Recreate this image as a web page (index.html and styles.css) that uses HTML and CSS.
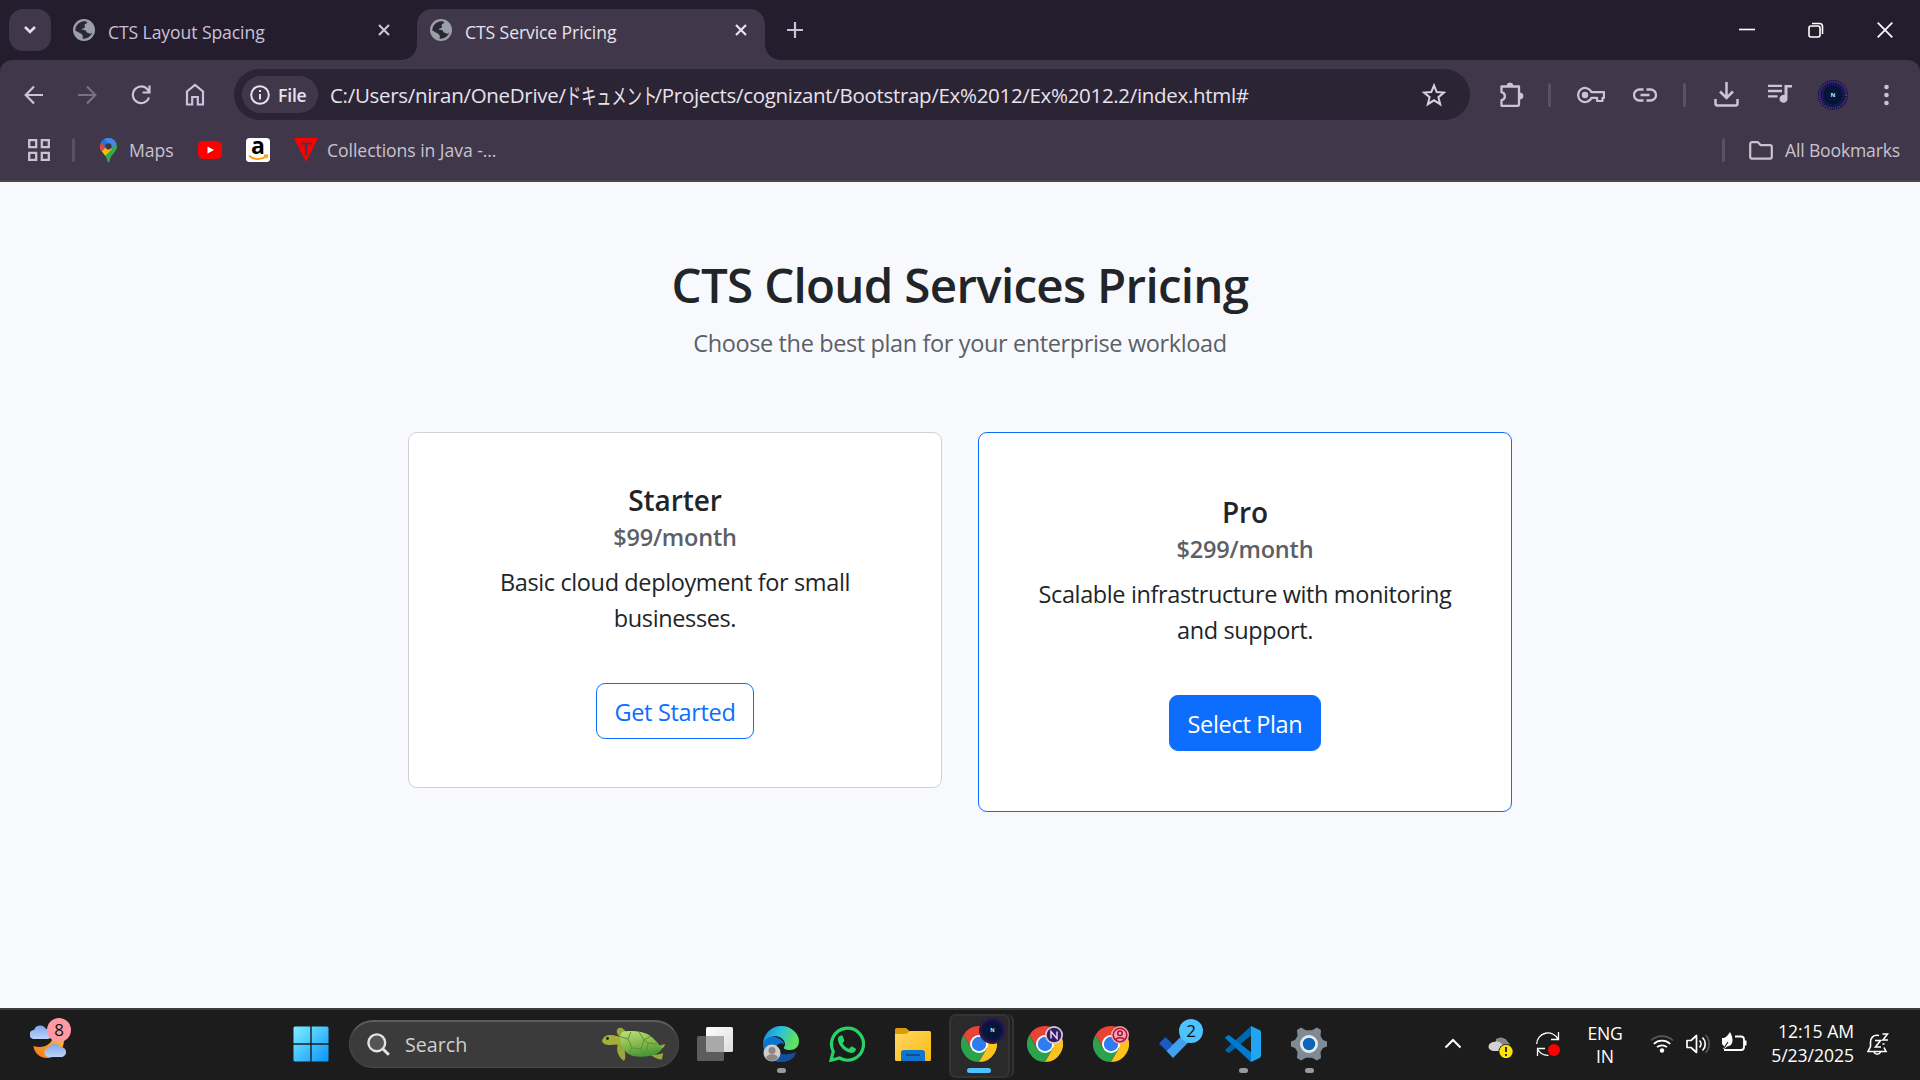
FILE: index.html
```html
<!DOCTYPE html>
<html lang="en">
<head>
<meta charset="utf-8">
<title>CTS Service Pricing</title>
<link rel="stylesheet" href="styles.css">
</head>
<body>
<svg class="defs" width="0" height="0" aria-hidden="true">
  <symbol id="globe" viewBox="0 0 22 22"><circle cx="11" cy="11" r="11" fill="#9aa0a6"/><path fill="#2c2637" d="M11 2.200c1.800 0 2.900 0.400 3.300 1.200-0.600 1.200-2.500 1.300-2.700 2.700-0.100 1.200 0.900 1.700 0 2.700C10.700 9.700 9 9 8.600 10.500c2 0.500 4.200 0.300 4.700 2 0.400 1.700 2.100 1.200 3.100 2 1 0.600 1.900 0.200 3-1.200A9 9 0 0 1 9.500 19.700c0.500-1.700 0.600-3.200-0.600-4.200C7.100 14 4.700 13 2.300 11.600 2.300 6.500 6 2.600 11 2.200z"/></symbol>
  <symbol id="x" viewBox="0 0 12 12"><path d="M1 1l10 10M11 1L1 11" fill="none" stroke="currentColor" stroke-width="2.200"/></symbol>
  <symbol id="chrome" viewBox="0 0 36 36"><path fill="#e94335" d="M2.400 9A18 18 0 0 1 33.600 9H18L10.200 22.500z"/><path fill="#2ba24c" d="M2.400 9A18 18 0 0 0 18 36L25.800 22.500H10.200z"/><path fill="#fcc31e" d="M33.600 9A18 18 0 0 1 18 36L25.800 22.500 18 9z"/><circle cx="18" cy="18" r="9" fill="#fff"/><circle cx="18" cy="18" r="7.200" fill="#2f7bf0"/></symbol>
</svg>

<header class="tabs">
  <button class="tab-search"><svg width="14" height="10" viewBox="0 0 14 10"><path d="M2 2l5 5 5-5" fill="none" stroke="#e6e0ea" stroke-width="2.600"/></svg></button>
  <div class="tab">
    <svg class="fav"><use href="#globe"/></svg><span class="tab-title">CTS Layout Spacing</span><svg class="x"><use href="#x"/></svg>
  </div>
  <div class="tab active">
    <svg class="fav"><use href="#globe"/></svg><span class="tab-title">CTS Service Pricing</span><svg class="x"><use href="#x"/></svg>
  </div>
  <svg class="new-tab" width="16" height="16" viewBox="0 0 16 16"><path d="M8 0v16M0 8h16" stroke="#cbc0d8" stroke-width="2.200"/></svg>
  <div class="win">
    <svg width="16" height="16" viewBox="0 0 16 16"><path d="M0 7.500h16" stroke="#fff" stroke-width="1.600"/></svg>
    <svg width="16" height="16" viewBox="0 0 16 16" fill="none" stroke="#fff" stroke-width="1.600"><rect x="1" y="4" width="11" height="11" rx="2"/><path d="M4 1.500h7.500a3 3 0 0 1 3 3V12"/></svg>
    <svg width="16" height="16" viewBox="0 0 16 16"><path d="M.7.700l14.600 14.600M15.300.700L.7 15.300" stroke="#fff" stroke-width="1.700"/></svg>
  </div>
</header>

<div class="chrome-bg"><div class="chrome">
<nav class="toolbar">
  <svg class="i-back" width="20" height="20" viewBox="0 0 20 20" fill="none" stroke="#cdc2dc" stroke-width="2.200"><path d="M19 10H2M10 1.500L1.700 10l8.300 8.500"/></svg>
  <svg class="i-fwd" width="20" height="20" viewBox="0 0 20 20" fill="none" stroke="#796f86" stroke-width="2.200"><path d="M1 10h17M10 1.500l8.300 8.500-8.300 8.500"/></svg>
  <svg class="i-reload" width="20" height="20" viewBox="0 0 20 20" fill="none" stroke="#cdc2dc" stroke-width="2.200"><path d="M18 12.500A8.300 8.300 0 1 1 16.400 4.300L18 6.500M18.500.500V7.500H11.500"/></svg>
  <svg class="i-home" width="20" height="23" viewBox="0 0 20 23" fill="none" stroke="#cdc2dc" stroke-width="2.200"><path d="M2 21.500V8.500L10 2l8 6.500v13h-5.200v-7.500H7.200v7.500z"/></svg>
  <div class="omnibox">
    <div class="chip">
      <svg width="20" height="20" viewBox="0 0 20 20" fill="none" stroke="#e8e2ec" stroke-width="2"><circle cx="10" cy="10" r="8.800"/><path d="M10 9v5.500M10 5v2"/></svg>
      <span class="file">File</span>
    </div>
    <div class="url"><span>C:/Users/niran/OneDrive/</span><span class="jp"><span class="kana">ドキュメント</span></span><span>/Projects/cognizant/Bootstrap/Ex%2012/Ex%2012.2/index.html#</span></div>
    <svg class="star" width="24" height="24" viewBox="0 0 24 24" fill="none" stroke="#d8d0df" stroke-width="2"><path d="M12 2.500l2.700 6.600 7.200.500-5.500 4.600 1.800 7-6.200-3.900-6.200 3.900 1.800-7L2.100 9.600l7.200-.5z"/></svg>
  </div>
  <svg class="i-ext" width="26" height="26" viewBox="0 0 26 26"><path d="M3.500 4.500h17.500v17.800a1.500 1.500 0 0 1-1.500 1.500H3.500v-5.600c4.500-1 4.500-7 0-8z" fill="none" stroke="#cdc2dc" stroke-width="2.300" stroke-linejoin="round"/><path d="M9 4a3 3 0 0 1 6 0zM22 11a3 3 0 0 1 0 6z" fill="#cdc2dc" stroke="#cdc2dc"/></svg>
  <i class="sep s1"></i>
  <svg class="i-key" width="28" height="18" viewBox="0 0 28 18"><path d="M14.500 6.200H27v5.600h-1.500V15h-5.400v-3.200h-5.600A7 7 0 1 1 14.500 6.200z" fill="none" stroke="#cdc2dc" stroke-width="2.200" stroke-linejoin="round"/><circle cx="8" cy="9" r="3.200" fill="#cdc2dc"/></svg>
  <svg class="i-link" width="24" height="14" viewBox="0 0 24 14" fill="none" stroke="#cdc2dc" stroke-width="2.300"><path d="M10.500 1.500H6.500a5.500 5.500 0 0 0 0 11h4M13.500 1.500h4a5.500 5.500 0 0 1 0 11h-4M7.500 7h9"/></svg>
  <i class="sep s2"></i>
  <svg class="i-dl" width="25" height="25" viewBox="0 0 25 25" fill="none" stroke="#cdc2dc" stroke-width="2.500"><path d="M12.500 0v15.500M6 9.500l6.500 6.500L19 9.500M1.500 17v4.500a2 2 0 0 0 2 2h18a2 2 0 0 0 2-2V17"/></svg>
  <svg class="i-media" width="24" height="19" viewBox="0 0 24 19"><path d="M0 1.800h14M0 7h14M0 12.300h9.500" stroke="#cdc2dc" stroke-width="2.300"/><path d="M16.500 1H24v2.600h-4.500v11.200a4 4 0 1 1-3-3.800z" fill="#cdc2dc"/></svg>
  <svg class="i-avatar" width="30" height="30" viewBox="0 0 30 30"><circle cx="15" cy="15" r="15" fill="#0b1238"/><circle cx="15" cy="15" r="13.300" fill="none" stroke="#5a3190" stroke-width="2.500" stroke-dasharray="1.200 1"/><circle cx="15" cy="15" r="10.500" fill="none" stroke="#252562" stroke-width="2" stroke-dasharray="1 1"/><circle cx="15" cy="15" r="9" fill="#02153a"/><text x="15" y="17.200" text-anchor="middle" class="avatar-n">N</text></svg>
  <svg class="i-dots" width="5" height="22" viewBox="0 0 5 22" fill="#cdc2dc"><circle cx="2.500" cy="3" r="2.300"/><circle cx="2.500" cy="11" r="2.300"/><circle cx="2.500" cy="19" r="2.300"/></svg>
</nav>
<nav class="bookmarks">
  <svg class="b-apps" width="22" height="22" viewBox="0 0 22 22" fill="none" stroke="#c9c3ce" stroke-width="2.300"><path d="M1.200 1.200h7v7h-7zM13.800 1.200h7v7h-7zM1.200 13.800h7v7h-7zM13.800 13.800h7v7h-7z"/></svg>
  <i class="sep b1"></i>
  <svg class="b-pin" width="17" height="24" viewBox="0 0 17 24"><defs><clipPath id="pin"><path d="M8.500 0A8.500 8.500 0 0 1 17 8.500c0 5.500-6.500 7.500-7.500 15a1 1 0 0 1-2 0C6.500 16 0 14 0 8.500A8.500 8.500 0 0 1 8.500 0z"/></clipPath></defs><g clip-path="url(#pin)"><path fill="#34a853" d="M0 0h17v24H0z"/><path fill="#fbbc04" d="M0 9l5-2 7 4L4 19H0z"/><path fill="#ea4335" d="M0 2l7 6-5.500 6H0z"/><path fill="#4285f4" d="M1 3L6 0h11v5L8 12z"/><path fill="#1a73e8" d="M1 3L3 0l6 6-4 4z"/></g><circle cx="8.500" cy="8.300" r="3.100" fill="#40374b"/></svg>
  <span class="bm m1">Maps</span>
  <svg class="b-yt" width="24" height="18" viewBox="0 0 24 18"><rect width="24" height="18" rx="5" fill="#f00"/><path d="M9.500 5.500v7l6.500-3.500z" fill="#fff"/></svg>
  <svg class="b-amz" width="24" height="24" viewBox="0 0 24 24"><rect width="24" height="24" rx="3.500" fill="#fff"/><text x="12" y="16" text-anchor="middle" class="amz-a">a</text><path d="M3 17.800c5 4.300 12 4.300 17 .700" fill="none" stroke="#ff9900" stroke-width="1.800"/><path d="M18 17.300l3.500-.3-.8 3.600" fill="none" stroke="#ff9900" stroke-width="1.300"/></svg>
  <svg class="b-tri" width="24" height="24" viewBox="0 0 24 24"><path d="M0 0h24L12 24z" fill="#f00"/><path d="M6.500 5.500h11M12 5.500V17" stroke="#40374b" stroke-width="2.200"/></svg>
  <span class="bm m2">Collections in Java -...</span>
  <i class="sep b2"></i>
  <svg class="b-folder" width="24" height="19" viewBox="0 0 24 19" fill="none" stroke="#c9c3ce" stroke-width="2.200" stroke-linejoin="round"><path d="M1.200 3a1.800 1.800 0 0 1 1.800-1.800h6l2.700 3h9.300a1.800 1.800 0 0 1 1.800 1.800v9.800a1.800 1.800 0 0 1-1.800 1.800H3a1.800 1.800 0 0 1-1.800-1.800z"/></svg>
  <span class="bm m3">All Bookmarks</span>
</nav>
</div></div>

<main class="page">
  <h1>CTS Cloud Services Pricing</h1>
  <p class="lead">Choose the best plan for your enterprise workload</p>
  <div class="cards">
    <section class="card">
      <h2>Starter</h2>
      <h3>$99/month</h3>
      <p>Basic cloud deployment for small<br>businesses.</p>
      <a class="btn outline"><span>Get Started</span></a>
    </section>
    <section class="card pro">
      <h2>Pro</h2>
      <h3>$299/month</h3>
      <p>Scalable infrastructure with monitoring<br>and support.</p>
      <a class="btn solid"><span>Select Plan</span></a>
    </section>
  </div>
</main>

<footer class="taskbar">
  <div class="weather">
    <svg width="36" height="42" viewBox="0 0 36 42"><defs><linearGradient id="moon" x1="0" y1="1" x2="1" y2="0"><stop offset="0" stop-color="#f27a1a"/><stop offset="1" stop-color="#f9c440"/></linearGradient><linearGradient id="cl" x1="0" y1="0" x2="0" y2="1"><stop offset="0" stop-color="#7ea6ee"/><stop offset="1" stop-color="#bcd3fb"/></linearGradient></defs><path d="M3.500 29c10 3 17-1 20-9 2-4 1-5 1-6 7 0 9.500 4 9.500 9 0 10-8 18-17 18C9 41 4 35 3.500 29z" fill="url(#moon)"/><path d="M4 22a4.500 4.500 0 0 1 0-9 6.500 6.500 0 0 1 12-1 5 5 0 0 1 2 10z" fill="url(#cl)"/><path d="M19 40a4.500 4.500 0 0 1 0-9 6 6 0 0 1 11-1 5 5 0 0 1 2 10z" fill="url(#cl)"/></svg>
    <span class="badge pink">8</span>
  </div>
  <svg class="k-win" width="36" height="36" viewBox="0 0 36 36"><defs><linearGradient id="wg" x1="0" y1="0" x2="1" y2="1"><stop offset="0" stop-color="#7df1ff"/><stop offset="1" stop-color="#0a93fb"/></linearGradient></defs><path fill="url(#wg)" d="M2 .5h15.300v16.800H.5V2A1.500 1.500 0 0 1 2 .5zM18.700.5H34A1.500 1.500 0 0 1 35.500 2v15.300H18.700zM.5 18.700h16.800v16.800H2A1.500 1.500 0 0 1 .5 34zM18.700 18.700h16.800V34a1.500 1.500 0 0 1-1.500 1.500H18.700z"/></svg>
  <div class="search">
    <svg width="23" height="23" viewBox="0 0 23 23" fill="none" stroke="#e3e3e3" stroke-width="2.400"><circle cx="9.800" cy="9.800" r="8.400" fill="#555"/><path d="M15.500 15.500l6.300 6.300" stroke-width="3"/></svg>
    <span class="search-t">Search</span>
    <svg class="turtle" width="64" height="36" viewBox="0 0 64 36"><defs><linearGradient id="sh" x1="0" y1="0" x2="0.300" y2="1"><stop offset="0" stop-color="#c3e07a"/><stop offset=".6" stop-color="#82b84a"/><stop offset="1" stop-color="#4b9a35"/></linearGradient></defs><path fill="#99a63a" d="M17 9c-3-3-3-7 0-8 3-1 5 1 7 4l-3 5zM16 17c-2 5-1 12 6 17 3-4 0-13-1-17zM49 28c4-1 8 0 12-2 0 3-1 5-1 6.500-4 0-8-2-11-4.500zM56 19l7-2c0 3-3 5-5 5z"/><path fill="#a5ad3c" d="M0 14c1-4 4-6 8-6 4 0 6 1 12 2v8c-5-1-8 0-12 0-4 0-7-1-8-4z"/><path d="M20 5C27 3 40 4 47 8c6 4 10 9 13 14-4 7-19 9-29 7C21 26 15 14 20 5z" fill="url(#sh)"/><path d="M29 5l-3 7 4 9 9 1 3-9-5-8M42 13l7-4M39 22l5 7M30 21l-4 6M26 12l-7-2M42 13l4 3 9 1M46 16l-1 7 4 4" fill="none" stroke="#5c9238" stroke-width="1"/><circle cx="5.500" cy="11.500" r="1.400" fill="#222"/></svg>
  </div>
  <svg class="k-tv" width="36" height="36" viewBox="0 0 36 36"><defs><linearGradient id="tv" x1="0" y1="0" x2="1" y2="1"><stop offset="0" stop-color="#fff"/><stop offset="1" stop-color="#dcdcdc"/></linearGradient></defs><rect x="9" y="1" width="27" height="25" rx="1.500" fill="url(#tv)"/><rect y="10" width="27" height="25" rx="1.500" fill="#5d5d5d"/><path d="M9 10h18v16H10.500A1.500 1.500 0 0 1 9 24.500z" fill="#a9a9a9"/></svg>
  <div class="app">
    <svg width="36" height="36" viewBox="0 0 36 36"><defs><linearGradient id="e1" x1="0" y1="0" x2="1" y2="0.300"><stop offset="0" stop-color="#1487d8"/><stop offset=".5" stop-color="#2bc0de"/><stop offset="1" stop-color="#62e25c"/></linearGradient></defs><path fill="#0a74cf" d="M0 18C1 10 8 9 13 11c5 2 8 5 8 7-4-2-8 1-8 5 0 6 6 10 14 8 3 0 5-2 6-3-3 5-9 8-15 8C8 36 0 28 0 18z"/><path fill="#124f9c" d="M14 23c1 5 7 6 12 5 3 0 6-2 7-2-2 6-8 10-15 10-6-1-9-6-4-13z"/><path fill="url(#e1)" d="M0 17C1 7 9 0 18 0c11 0 18 8 18 15 0 6-4 9-9 9-4 0-7-1-6-3 1-1 1-2 1-3 0-4-5-8-10-8-6 0-10 3-12 7z"/><circle cx="9" cy="27" r="8.500" fill="#d0ccc8"/><circle cx="9" cy="24.500" r="3.500" fill="#8b8783"/><path d="M3 32c1-5 11-5 12 0-3 4-9 4-12 0z" fill="#8b8783"/></svg>
    <i class="dot"></i>
  </div>
  <div class="app"><svg width="36" height="36" viewBox="0 0 36 36"><path d="M2 34.200l2.300-8.700A16 16 0 1 1 10.500 32z" fill="none" stroke="#25d366" stroke-width="3.200"/><path fill="#25d366" d="M12.500 9.500c-2.500 0-4 2.500-3.500 5 1 5.500 7 12 13.500 12.500 2.500 0 4.500-1.700 4.500-4 0-.6-4-2.700-4.700-2.500-.8.300-1.500 2.200-2.300 2.200-2 0-6-4-6.300-5.500-.1-.7 1.500-1.500 1.600-2.400 0-.8-1.400-5-2-5.200z"/></svg></div>
  <div class="app"><svg width="36" height="36" viewBox="0 0 36 36"><defs><linearGradient id="fo" x1="0" y1="0" x2="1" y2="1"><stop offset="0" stop-color="#ffd968"/><stop offset="1" stop-color="#fbb80c"/></linearGradient></defs><path d="M0 3.500A1.500 1.500 0 0 1 1.500 2H11l4 3.500V9H0z" fill="#dd9a06"/><path d="M0 8h11l4-3h19.500A1.500 1.500 0 0 1 36 6.500V33.500A1.500 1.500 0 0 1 34.500 35h-33A1.500 1.500 0 0 1 0 33.500z" fill="url(#fo)"/><path d="M6 35V27a3 3 0 0 1 3-3h18a3 3 0 0 1 3 3v8z" fill="#1175cf"/><path d="M11 29h14" stroke="#0a4c91" stroke-width="1.800"/></svg></div>
  <div class="app current">
    <svg width="36" height="36"><use href="#chrome"/></svg>
    <svg class="over big" width="27" height="27" viewBox="0 0 30 30"><circle cx="15" cy="15" r="15" fill="#2b1b4d"/><circle cx="15" cy="15" r="12" fill="#0c1640"/><circle cx="15" cy="15" r="9" fill="#02153a"/><text x="15" y="17.200" text-anchor="middle" class="avatar-n">N</text></svg>
    <i class="dot blue"></i>
  </div>
  <div class="app"><svg width="36" height="36"><use href="#chrome"/></svg><svg class="over" width="18" height="18" viewBox="0 0 18 18"><circle cx="9" cy="9" r="9" fill="#d6cde6"/><circle cx="9" cy="9" r="7.300" fill="#391b63"/><path d="M6 12.500V5.500l6 7V5.500" fill="none" stroke="#e3d8f2" stroke-width="1.500"/></svg></div>
  <div class="app"><svg width="36" height="36"><use href="#chrome"/></svg><svg class="over" width="18" height="18" viewBox="0 0 18 18"><circle cx="9" cy="9" r="9" fill="#f2a6b4"/><g fill="none" stroke="#b3102e" stroke-width="1.500"><circle cx="9" cy="9" r="6.800"/><circle cx="9" cy="7.300" r="2.300"/><path d="M4.500 13.500c2-2.500 7-2.500 9 0"/></g></svg></div>
  <div class="app"><svg width="36" height="36" viewBox="0 0 36 36"><path d="M6.500 11L0 17.500 7.500 25l6.500-6.500z" fill="#1b5bc0"/><path d="M7.500 25L29 3.500l6.500 6.500L14 32z" fill="#41a1ee"/></svg><span class="badge cyan">2</span></div>
  <div class="app"><svg width="36" height="36" viewBox="0 0 36 36"><path d="M26 0L27 9 4 27 1 25.500a1.500 1.500 0 0 1-.3-2.200z" fill="#0065a9"/><path d="M26 36l1-9L4 9 1 10.500a1.500 1.500 0 0 0-.3 2.200z" fill="#007acc"/><path d="M26 0l8.500 4A2.500 2.500 0 0 1 36 6.200v23.600a2.500 2.500 0 0 1-1.500 2.200L26 36z" fill="#21a5f3"/></svg><i class="dot"></i></div>
  <div class="app"><svg width="36" height="36" viewBox="0 0 36 36"><path d="M10 1.500l5 2.800h6l5-2.800 4 2.500-.5 6 2.500 4 4 1.500v5L32 22l-2.500 4 .5 6-4 2.500-5-2.800h-6l-5 2.800-4-2.500.5-6L4 22l-4-1.500v-5L4 14l2.500-4L6 4z" fill="#7f8a94"/><circle cx="18" cy="18" r="9" fill="#e8eaec"/><circle cx="18" cy="18" r="6.200" fill="#0b66b8"/></svg><i class="dot"></i></div>

  <div class="tray">
    <svg class="y-up" width="18" height="11" viewBox="0 0 18 11"><path d="M1.500 9.500L9 2l7.500 7.500" fill="none" stroke="#fff" stroke-width="2"/></svg>
    <svg class="y-od" width="26" height="24" viewBox="0 0 26 24"><path d="M8 5a8 8 0 0 1 12 3c3 2 3 7-1 8H8z" fill="#878787"/><path d="M5 17C-2 16 0 8 6 8c4-2 7 1 10 4v5z" fill="#d3d3d3"/><circle cx="18" cy="17.500" r="7.500" fill="#1c1c1c"/><circle cx="18" cy="17.500" r="6.700" fill="#fbe10b"/><path d="M18 13v5M18 20v2" stroke="#222" stroke-width="1.800"/></svg>
    <svg class="y-sync" width="24" height="24" viewBox="0 0 24 24"><path d="M.7 12A11.300 11.300 0 0 1 22 7M22.500 0v7.500h-7.500M1.500 24v-7.500H9M1.500 17c2 4 6 6.500 11 6.300" fill="none" stroke="#fff" stroke-width="1.300"/><circle cx="18" cy="18" r="6" fill="#f00"/></svg>
    <div class="lang"><span>ENG</span><span>IN</span></div>
    <svg class="y-wifi" width="24" height="20" viewBox="0 0 24 20" fill="none"><path d="M1 6.500a16 16 0 0 1 22 0" stroke="#5a5a5a" stroke-width="1.600"/><path d="M3.800 9.800a12 12 0 0 1 16.400 0M7 13.200a7.500 7.500 0 0 1 10 0" stroke="#fff" stroke-width="1.800"/><circle cx="12" cy="16.500" r="2.200" fill="#fff"/></svg>
    <svg class="y-vol" width="24" height="20" viewBox="0 0 24 20" fill="none" stroke="#fff" stroke-width="1.700"><path d="M1 6.500h4L10.500 1.500v17L5 13.500H1z" stroke-linejoin="round"/><path d="M13.500 6.500a5 5 0 0 1 0 7M16.500 3.500a9 9 0 0 1 0 13"/><path d="M19.500 1a13 13 0 0 1 0 18" stroke="#555"/></svg>
    <svg class="y-bat" width="25" height="20" viewBox="0 0 25 20"><path d="M13 4.500h6a3 3 0 0 1 3 3v7.500a3 3 0 0 1-3 3H2" fill="none" stroke="#fff" stroke-width="1.800"/><path d="M22 8.500h2.500v5H22z" fill="#fff"/><path d="M0 6c4 0 5-2 8-6 3 5 4 12-1 14-3 0-3 3-6 3 1-2 1-2 1-3-3-2-3-5-2-8z" fill="#fff"/><path d="M2 16l4-6" stroke="#1c1c1c" stroke-width="1.200"/></svg>
    <div class="clock"><span>12:15 AM</span><span>5/23/2025</span></div>
    <svg class="y-bell" width="22" height="23" viewBox="0 0 22 23" fill="none" stroke="#fff" stroke-width="1.600"><path d="M12 2.500C6 1.500 3.500 5 3.500 9.500v4L1 18.500h18l-2-4"/><path d="M7 19a3.500 3.500 0 0 0 6.500 0M8 7.500h5.500l-5 6.500H14M15.500 1h5l-4.500 6h5M15.500 11h2"/></svg>
  </div>
</footer>
</body>
</html>
```
FILE: styles.css
```css
* { box-sizing: border-box; }
body { margin: 0; width: 1920px; height: 1080px; overflow: hidden; display: flex; flex-direction: column; background: #f8f9fc; font-family: "Open Sans", "Noto Sans", sans-serif; color: #212529; }
svg { display: block; flex: none; }
.defs { position: absolute; }
h1, h2, h3, p { margin: 0; }
span { white-space: nowrap; }

.tabs { height: 60px; flex: none; background: #231d2e; display: flex; align-items: flex-start; padding-left: 9px; }
.tab-search { width: 42px; height: 42px; margin-top: 9px; border: 0; padding: 0; border-radius: 14px; background: #40374b; display: flex; align-items: center; justify-content: center; }
.tab { width: 348px; height: 51px; margin: 9px 0 0 9px; padding: 0 18px 9px 13px; display: flex; align-items: center; color: #cbc0d8; position: relative; }
.tab.active { background: #40374b; border-radius: 15px 15px 0 0; color: #e8e2ec; }
.tab.active::before, .tab.active::after { content: ""; position: absolute; bottom: 0; width: 15px; height: 15px; }
.tab.active::before { left: -15px; background: radial-gradient(circle at 0 0, transparent 14.500px, #40374b 15px); }
.tab.active::after { right: -15px; background: radial-gradient(circle at 100% 0, transparent 14.500px, #40374b 15px); }
.fav { width: 22px; height: 22px; }
.x { width: 12px; height: 12px; margin-left: auto; }
.tab-title { font-size: 17.600px; letter-spacing: -.1px; line-height: 24px; margin-left: 13px; padding-top: 3px; }
.new-tab { margin: 22px 0 0 22px; }
.win { margin: 22px 27px 0 auto; display: flex; gap: 53px; }

.chrome-bg { background: #231d2e; flex: none; height: 122px; }
.chrome { height: 122px; background: #40374b; border-radius: 12px 12px 0 0; border-bottom: 2px solid #4a4650; }
.toolbar { height: 69px; display: flex; align-items: center; padding: 0 0 0 24px; }
.i-fwd { margin-left: 33px; }
.i-reload { margin-left: 34px; }
.i-home { margin-left: 34px; }
.omnibox { width: 1236px; height: 51px; margin-left: 29px; border-radius: 26px; background: #2b2435; display: flex; align-items: center; padding: 0 24px 0 8px; }
.chip { width: 76px; height: 37px; border-radius: 19px; background: #40374b; display: flex; align-items: center; padding-left: 8px; gap: 8px; }
.file { font-size: 17.600px; letter-spacing: -.2px; font-weight: 600; color: #e8e2ec; }
.url { display: flex; align-items: center; margin-left: 12px; font-size: 20.500px; letter-spacing: -.31px; line-height: 30px; color: #e8e2ec; }
.jp { width: 89px; height: 30px; }
.kana { display: inline-block; font-family: "Noto Sans CJK JP", sans-serif; font-size: 22px; letter-spacing: 0; line-height: 28px; transform: scaleX(.69); transform-origin: 0 50%; }
.star { margin-left: auto; }
.sep { width: 3px; height: 24px; border-radius: 2px; background: #5a5067; flex: none; }
.i-ext { margin-left: 28px; }
.s1 { margin-left: 24px; }
.i-key { margin-left: 26px; }
.i-link { margin-left: 28px; }
.s2 { margin-left: 26px; }
.i-dl { margin-left: 28px; }
.i-media { margin-left: 29px; margin-bottom: 2px; }
.i-avatar { margin-left: 26px; }
.i-dots { margin-left: 36px; }
.avatar-n { font: 700 6px "Open Sans", sans-serif; fill: #d8e4f4; }
.bookmarks { height: 42px; display: flex; align-items: center; padding-left: 28px; }
.bm { font-size: 17.600px; letter-spacing: -.06px; line-height: 24px; color: #c9c3ce; padding-bottom: 1px; }
.b1 { margin-left: 22px; }
.b-pin { margin-left: 25px; }
.m1 { width: 43px; margin-left: 12px; }
.b-yt { margin-left: 26px; }
.b-amz { margin-left: 24px; overflow: visible; }
.b-tri { margin-left: 24px; }
.m2 { margin-left: 9px; }
.b2 { margin-left: auto; }
.b-folder { margin-left: 24px; }
.m3 { width: 113px; letter-spacing: -.17px; margin: 0 22px 0 12px; }
.amz-a { font: 700 23px "Open Sans", sans-serif; fill: #000; }

.page { flex: 1; padding-top: 74px; text-align: center; }
h1 { font-size: 47.500px; letter-spacing: -.7px; line-height: 58px; font-weight: 600; }
.lead { font-size: 23.500px; letter-spacing: -.38px; line-height: 36px; margin-top: 11px; color: #5b6067; }
.cards { display: flex; justify-content: center; align-items: flex-start; gap: 36px; margin-top: 71px; }
.card { width: 534px; height: 356px; padding: 49px 48px 48px; border: 1px solid #d0d1d4; border-radius: 9px; background: #fff; }
.card.pro { height: 380px; padding: 61px 60px 60px; border-color: #0d6efd; }
h2 { font-size: 28px; letter-spacing: -.1px; line-height: 36px; font-weight: 600; }
h3 { font-size: 23.500px; letter-spacing: -.2px; line-height: 29px; margin-top: 5px; font-weight: 600; color: #5b6067; }
.card p { font-size: 23.500px; letter-spacing: -.38px; line-height: 36px; margin: 12px -20px 0; }
.btn { display: inline-flex; align-items: center; justify-content: center; height: 56px; margin-top: 47px; border: 1px solid #0d6efd; border-radius: 9px; font-size: 23.500px; letter-spacing: -.33px; vertical-align: top; }
.btn span { padding-top: 1px; }
.outline { width: 158px; color: #0d6efd; }
.solid { width: 152px; background: #0d6efd; color: #fff; }

.taskbar { height: 72px; flex: none; background: #1c1c1c; border-top: 2px solid #3d3d3d; display: flex; align-items: flex-start; color: #fff; }
.weather { position: relative; margin: 7px 0 0 30px; width: 36px; }
.badge { position: absolute; width: 24px; height: 24px; border-radius: 50%; color: #111; font-size: 17px; line-height: 24px; text-align: center; }
.pink { left: 17px; top: 1px; background: #ff99a4; }
.cyan { left: 20px; top: -7px; background: #4cc2ff; }
.k-win { margin: 16px 0 0 227px; }
.search { width: 330px; height: 48px; margin: 10px 0 0 20px; border-radius: 24px; background: #3b3b3b; border: 1px solid #4a4a4a; border-top: 2px solid #5d5d5d; display: flex; align-items: center; padding: 0 12px 0 17px; }
.search-t { margin-left: 15px; font-size: 19.700px; color: #cfcfcf; }
.turtle { margin-left: auto; }
.k-tv { margin: 16px 30px 0 18px; }
.app { position: relative; width: 36px; height: 48px; margin: 16px 30px 0 0; }
.app > svg { position: relative; }
.current::before { content: ""; position: absolute; left: -12px; top: -12px; width: 57px; height: 60px; border: 2px solid #343434; border-radius: 7px; background: #2a2a2a; box-shadow: 2px 0 0 #1f1f1f, 4px 0 0 #333; }
.dot { position: absolute; left: 14px; top: 42px; width: 9px; height: 5px; border-radius: 3px; background: #9a9a9a; }
.blue { left: 6px; width: 24px; background: #4cc2ff; }
.app > .over { position: absolute; left: 18px; top: 0; }
.app > .big { left: 18px; top: -9px; }
.tray { margin-left: auto; display: flex; align-items: flex-start; }
.y-up { margin-top: 28px; }
.y-od { margin: 24px 0 0 26px; }
.y-sync { margin: 22px 0 0 22px; }
.lang { width: 40px; margin: 12px 0 0 25px; font-size: 17.600px; letter-spacing: -.2px; line-height: 23px; display: flex; flex-direction: column; align-items: center; }
.y-wifi { margin: 24px 0 0 25px; }
.y-vol { margin: 24px 0 0 12px; }
.y-bat { margin: 22px 0 0 12px; }
.clock { width: 90px; margin: 9px 0 0 17px; font-size: 17.600px; letter-spacing: -.05px; line-height: 24px; display: flex; flex-direction: column; align-items: flex-end; }
.y-bell { margin: 23px 31px 0 13px; }
```
